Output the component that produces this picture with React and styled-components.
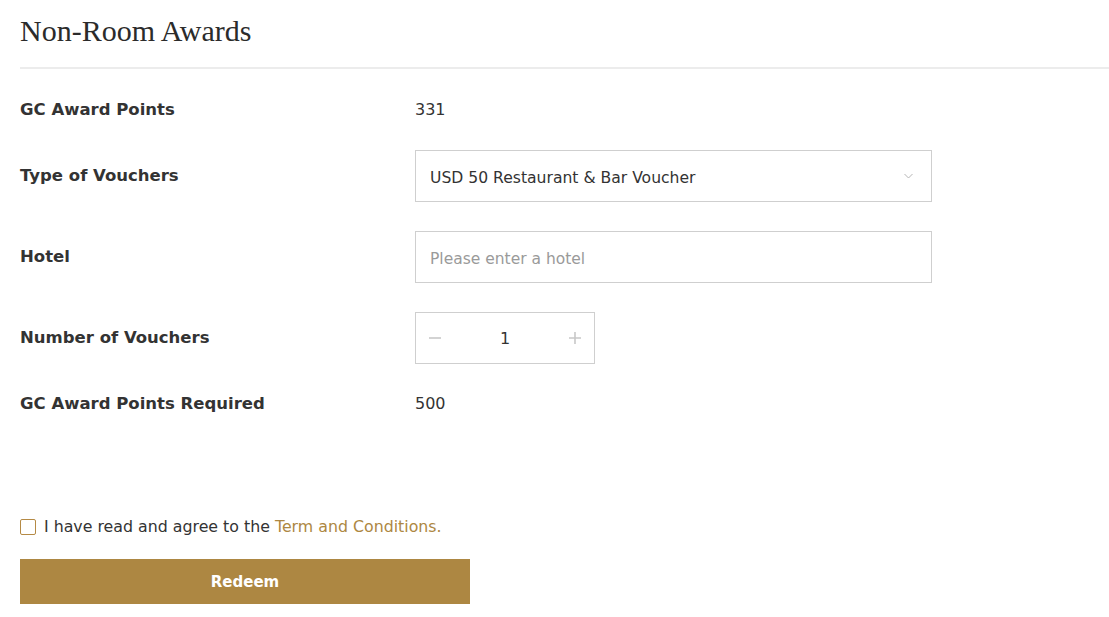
import React, { useState } from "react";
import styled, { createGlobalStyle } from "styled-components";

const GlobalStyle = createGlobalStyle`
  html, body {
    margin: 0;
    padding: 0;
    background: #ffffff;
  }
  body {
    font-family: "DejaVu Sans", "Open Sans", sans-serif;
    color: #333333;
  }
  * { box-sizing: border-box; }
`;

const Page = styled.div`
  padding: 0 0 0 20px;
  width: 1109px;
`;

const Title = styled.h1`
  margin: 0;
  padding: 14px 0 19px;
  font-family: "Liberation Serif", "DejaVu Serif", serif;
  font-weight: 400;
  font-size: 30px;
  line-height: 34px;
  color: #2b2b2b;
  border-bottom: 2px solid #ececec;
`;

const Form = styled.div`
  padding-top: 30px;
  display: flex;
  flex-direction: column;
  gap: 29px;
`;

const Row = styled.div`
  display: grid;
  grid-template-columns: 395px 1fr;
  align-items: center;
  min-height: 22px;
`;

const Label = styled.div`
  font-size: 16.5px;
  font-weight: 600;
  color: #333333;
  line-height: 22px;
`;

const Value = styled.div`
  font-size: 16px;
  color: #333333;
  line-height: 22px;
`;

const Field = styled.div`
  position: relative;
  width: ${(p) => p.$width || 517}px;
  height: 52px;
  border: 1px solid #cfcfcf;
  display: flex;
  align-items: center;
  background: #fff;
`;

const FieldText = styled.span`
  padding: 3px 0 0 14px;
  font-size: ${(p) => (p.$placeholder ? "15.5px" : "15.6px")};
  color: ${(p) => (p.$placeholder ? "#9a9a9a" : "#333333")};
`;

const Chevron = styled.svg`
  position: absolute;
  right: 18px;
  top: 50%;
  transform: translateY(-50%);
`;

const Stepper = styled(Field)`
  justify-content: space-between;
  padding: 0 11px 0 11px;
`;

const StepButton = styled.button`
  border: none;
  background: none;
  padding: 0;
  width: 16px;
  height: 16px;
  display: flex;
  align-items: center;
  justify-content: center;
  cursor: pointer;
`;

const Count = styled.span`
  font-size: 16px;
  color: #333;
`;

const Agree = styled.label`
  margin-top: 102px;
  display: flex;
  align-items: center;
  gap: 8px;
  font-size: 15.8px;
  color: #333;
  line-height: 20px;
`;

const Box = styled.span`
  width: 16px;
  height: 16px;
  border: 1.5px solid #b58a45;
  border-radius: 2px;
  display: inline-block;
  background: #fff;
`;

const Link = styled.a`
  color: #ad8742;
  text-decoration: none;
`;

const Redeem = styled.button`
  margin-top: 22px;
  width: 450px;
  height: 45px;
  border: none;
  background: #ad8742;
  color: #ffffff;
  font-family: "DejaVu Sans", sans-serif;
  font-weight: 700;
  font-size: 15px;
  cursor: pointer;
`;

const ChevronIcon = () => (
  <Chevron width="9" height="5" viewBox="0 0 9 5">
    <path d="M0.5 0.5 L4.5 4.5 L8.5 0.5" fill="none" stroke="#b5b5b5" strokeWidth="1" />
  </Chevron>
);

const MinusIcon = () => (
  <svg width="12" height="12" viewBox="0 0 12 12">
    <path d="M0 6 H12" stroke="#c8c8c8" strokeWidth="1.6" />
  </svg>
);

const PlusIcon = () => (
  <svg width="12" height="12" viewBox="0 0 12 12">
    <path d="M0 6 H12 M6 0 V12" stroke="#c8c8c8" strokeWidth="1.6" />
  </svg>
);

export default function App() {
  const [count, setCount] = useState(1);
  return (
    <Page>
      <GlobalStyle />
      <Title>Non-Room Awards</Title>
      <Form>
        <Row>
          <Label>GC Award Points</Label>
          <Value>331</Value>
        </Row>
        <Row>
          <Label>Type of Vouchers</Label>
          <Field>
            <FieldText>USD 50 Restaurant &amp; Bar Voucher</FieldText>
            <ChevronIcon />
          </Field>
        </Row>
        <Row>
          <Label>Hotel</Label>
          <Field>
            <FieldText $placeholder>Please enter a hotel</FieldText>
          </Field>
        </Row>
        <Row>
          <Label>Number of Vouchers</Label>
          <Stepper $width={180}>
            <StepButton onClick={() => setCount((c) => Math.max(1, c - 1))}>
              <MinusIcon />
            </StepButton>
            <Count>{count}</Count>
            <StepButton onClick={() => setCount((c) => c + 1)}>
              <PlusIcon />
            </StepButton>
          </Stepper>
        </Row>
        <Row>
          <Label>GC Award Points Required</Label>
          <Value>{500 * count}</Value>
        </Row>
      </Form>
      <Agree>
        <Box />
        <span>
          I have read and agree to the <Link href="#">Term and Conditions.</Link>
        </span>
      </Agree>
      <Redeem>Redeem</Redeem>
    </Page>
  );
}
